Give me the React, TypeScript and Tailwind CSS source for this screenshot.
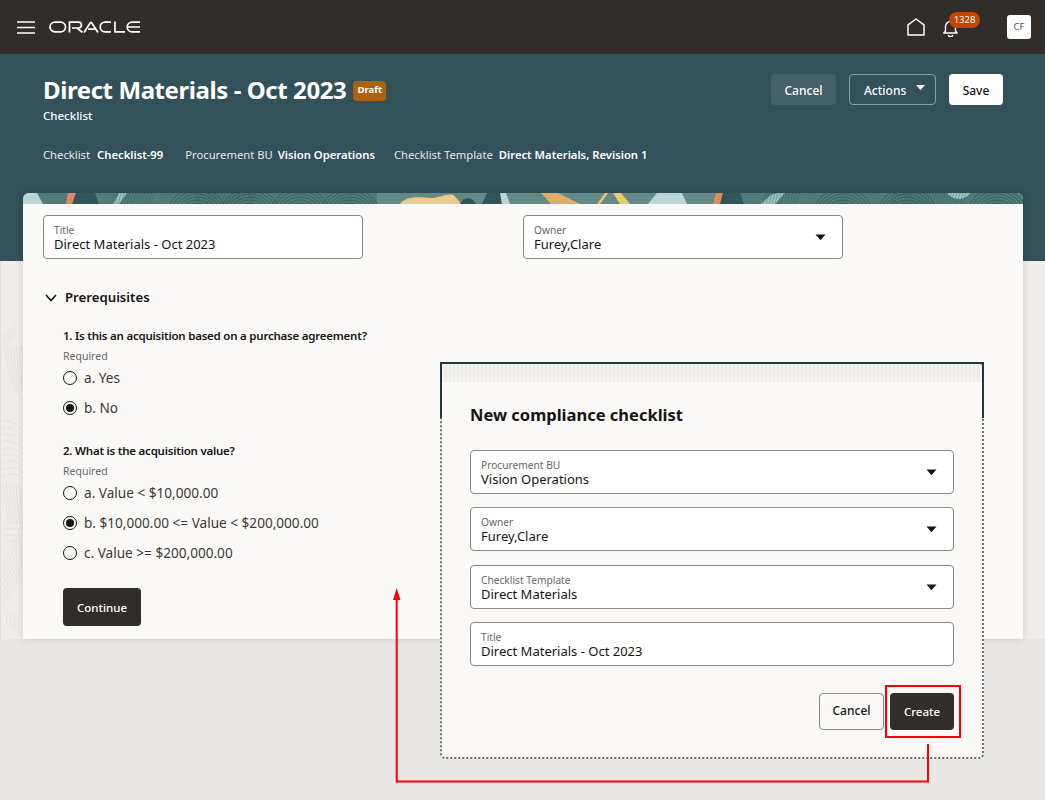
import React from "react";

function Field({ label, value, select, w }: { label: string; value: string; select?: boolean; w: string }) {
  return (
    <div className={`${w} h-[44px] shrink-0 relative bg-white border border-[#8c8985] rounded-[4px] pl-[10px] pt-[8px]`}>
      <div className="text-[10.2px] leading-[12px] text-[#6b6865]">{label}</div>
      <div className="text-[13px] leading-[16px] text-[#161513]">{value}</div>
      {select && (
        <svg className="absolute right-[16px] top-[18px]" width="11" height="7" viewBox="0 0 11 7">
          <path d="M0.5 0.5 H10.5 L5.5 6.2 Z" fill="#161513" />
        </svg>
      )}
    </div>
  );
}

function Radio({ label, on }: { label: string; on?: boolean }) {
  return (
    <div className="flex items-center h-[30px] gap-[7px]">
      <span className="w-[14px] h-[14px] rounded-full border-[1.5px] border-[#161513] flex items-center justify-center shrink-0">
        {on && <span className="w-[8px] h-[8px] rounded-full bg-[#161513]" />}
      </span>
      <span className="text-[13.6px] text-[#3b3936]">{label}</span>
    </div>
  );
}

function Question({ title, options }: { title: string; options: { l: string; on?: boolean }[] }) {
  return (
    <div>
      <div className="text-[11.5px] leading-[18px] font-semibold tracking-[-0.23px] text-[#161513]">{title}</div>
      <div className="text-[10.5px] leading-[14px] text-[#6b6865] mt-[4px]">Required</div>
      <div>
        {options.map((o) => (
          <Radio key={o.l} label={o.l} on={o.on} />
        ))}
      </div>
    </div>
  );
}

function Strip() {
  const rings = [174, 227, 277, 327, 820, 884, 974];
  const hatch = [
    [92, 132],
    [172, 232],
    [740, 777],
    [868, 945],
  ];
  return (
    <svg className="block w-full h-[11px]" viewBox="0 0 1000 11" preserveAspectRatio="none">
      <rect width="1000" height="11" fill="#517b78" />
      <rect x="354" width="350" height="11" fill="#648a87" />
      <path d="M0 0 H14 L20 11 H0 Z" fill="#b9d6d5" />
      <path d="M45 0 H53 L49 11 H43 Z" fill="#e48a5a" />
      <path d="M53 0 H72 L76 11 H49 Z" fill="#33555a" />
      <path d="M96 0 H104 L96 11 H90 Z" fill="#9cc4c1" />
      <path d="M377 11 C383 3 396 4 408 5 C418 5 424 0 430 2 C433 4 436 8 438 11 Z" fill="#ecc98f" />
      <path d="M437 11 C441 3 449 3 453 11 Z" fill="#33555a" />
      <path d="M464 0 H477 L479 11 H459 Z" fill="#33555a" />
      <path d="M477 0 H483 L487 11 H479 Z" fill="#b9d6d5" />
      <path d="M518 0 H535 L557 11 H528 Z" fill="#e0ae62" />
      <path d="M574 11 L582 0 H585 L577 11 Z" fill="#ecc96a" />
      <path d="M590 0 H598 L607 11 H597 Z" fill="#ecc96a" />
      <path d="M625 11 L634 0 H659 L664 11 Z" fill="#b9d6d5" />
      <path d="M693 0 H700 L697 11 H690 Z" fill="#e48a5a" />
      <path d="M700 0 H717 L721 11 H697 Z" fill="#33555a" />
      <path d="M738 11 L748 2 L755 0 H762 L752 11 Z" fill="#9cc4c1" />
      <path d="M924 0 H947 C942 8 930 8 924 0 Z" fill="#9cc4c1" />
      {hatch.map(([a, b]) => (
        <g key={a} stroke="#2c4a4b" strokeWidth="0.5" opacity="0.65">
          {Array.from({ length: Math.floor((b - a) / 3) }, (_, i) => (
            <path key={i} d={`M${a + i * 3 + 3} 0 L${a + i * 3} 11`} />
          ))}
        </g>
      ))}
      {rings.map((x) => (
        <g key={x} fill="none" stroke="#24403f" strokeWidth="0.6" opacity="0.8">
          {[10, 13, 16, 19, 22, 25, 28, 31].map((r) => (
            <circle key={r} cx={x} cy="26" r={r} />
          ))}
        </g>
      ))}
    </svg>
  );
}

function SidePattern() {
  const s = "#e3e2df";
  return (
    <svg className="w-full h-full block" viewBox="0 0 23 378" preserveAspectRatio="none">
      <g fill="none" stroke={s} strokeWidth="1">
        {[0, 1, 2, 3].map((i) => (
          <path key={`a${i}`} d={`M1 ${76 + i * 3} L18 ${62 + i * 3}`} />
        ))}
        {[0, 1, 2, 3, 4, 5, 6].map((i) => (
          <path key={`b${i}`} d={`M${4 + i * 3} 85 C${6 + i * 3} 110 ${12 + i * 2} 130 23 ${140 - i * 5}`} />
        ))}
        {[0, 1, 2, 3, 4, 5, 6, 7, 8].map((i) => (
          <path key={`c${i}`} d={`M1 ${160 + i * 7} C8 ${158 + i * 7} 16 ${162 + i * 6} 23 ${170 + i * 6}`} />
        ))}
        {[0, 1, 2, 3, 4, 5].map((i) => (
          <path key={`d${i}`} d={`M${2 + i * 3.5} 222 C${4 + i * 3} 240 ${6 + i * 3} 250 ${8 + i * 3} 262`} />
        ))}
        {[0, 1, 2, 3].map((i) => (
          <path key={`e${i}`} d={`M3 ${262 + i * 6} H23`} />
        ))}
        {[0, 1, 2, 3, 4, 5, 6].map((i) => (
          <path key={`f${i}`} d={`M1 ${345 - i * 7} C8 ${336 - i * 7} 16 ${325 - i * 8} 23 ${300 - i * 6}`} />
        ))}
        {[0, 1, 2, 3].map((i) => (
          <path key={`g${i}`} d={`M${6 + i * 4} 353 V${364 + i * 2}`} />
        ))}
      </g>
    </svg>
  );
}

export default function App() {
  return (
    <div
      className="relative w-[1045px] h-[800px] overflow-hidden bg-[#e8e7e5] text-[#161513]"
      style={{ fontFamily: '"Noto Sans", sans-serif' }}
    >
      {/* top bar */}
      <header className="h-[54px] bg-[#312d2a] flex items-center pl-[17px] pr-[14px]">
        <svg width="18" height="13" viewBox="0 0 18 13" className="shrink-0">
          <path d="M0 1 H18 M0 6.5 H18 M0 12 H18" stroke="#fff" strokeWidth="1.7" />
        </svg>
        <svg width="92" height="12" viewBox="0 0 92 12" className="ml-[14px] shrink-0">
          <g fill="none" stroke="#fff" strokeWidth="1.7">
            <rect x="1" y="1.2" width="15.5" height="9.6" rx="4.8" />
            <path d="M20.5 11.5 V1.2 H29.5 a2.8 2.8 0 0 1 0 5.8 H23 M28 7 L33.5 11.5" />
            <path d="M35 11.5 L41.5 1.5 H42.5 L49 11.5 M39 8.2 H46" />
            <path d="M62 1.2 H56 a4.8 4.8 0 0 0 0 9.6 H62" />
            <path d="M66 0.5 V10.8 H76" />
            <path d="M91 1.2 H83 a4.8 4.8 0 0 0 0 9.6 H91 M79 6 H91" />
          </g>
        </svg>
        <div className="flex-1" />
        <svg width="18" height="18" viewBox="0 0 18 18" className="shrink-0 mr-[18px]">
          <path d="M1 17 V6.8 L9 1 L17 6.8 V17 Z" fill="none" stroke="#fff" strokeWidth="1.5" strokeLinejoin="round" />
        </svg>
        <div className="relative w-[15px] h-[17px] mr-[49px] mt-[2px] shrink-0">
          <svg width="15" height="17" viewBox="0 0 15 17" className="block">
            <path d="M2.5 11 V6.5 a5 5 0 0 1 10 0 V11 L14.2 13 H0.8 Z" fill="none" stroke="#fff" strokeWidth="1.4" strokeLinejoin="round" />
            <path d="M5.5 15 a2 1.8 0 0 0 4 0" fill="none" stroke="#fff" strokeWidth="1.4" />
          </svg>
          <span className="absolute left-[6px] top-[-8px] h-[16px] w-[31px] rounded-full bg-[#c74300] text-white text-[9.5px] leading-[16px] text-center">
            1328
          </span>
        </div>
        <div className="w-[24px] h-[24px] bg-white rounded-[3px] text-[9.5px] text-[#57534f] flex items-center justify-center shrink-0">CF</div>
      </header>

      {/* teal band */}
      <section className="h-[207px] bg-[#325158] pl-[43px] pr-[42px] pt-[20px] text-white">
        <div className="flex items-start justify-between">
          <div>
            <div className="flex items-center gap-[7px] h-[33px]">
              <h1 className="text-[24px] leading-[32px] font-bold tracking-[-0.42px] whitespace-nowrap mt-[-2px]">Direct Materials - Oct 2023</h1>
              <span className="h-[20px] w-[33px] rounded-[4px] bg-[#ac630c] text-[9.5px] font-bold flex items-center justify-center">Draft</span>
            </div>
            <div className="text-[11.5px] leading-[16px] font-medium mt-[1px]">Checklist</div>
          </div>
          <div className="flex gap-[13px]">
            <button className="w-[65px] h-[31px] rounded-[4px] bg-[#426066] text-[12px] font-medium text-white pt-[2px]">Cancel</button>
            <button className="w-[87px] h-[31px] rounded-[4px] border border-[#8a9fa2] text-[12px] font-medium text-white flex items-center pl-[14px] pt-[2px]">
              Actions
              <svg width="9" height="5" viewBox="0 0 9 5" className="ml-[10px] mb-[6px]"><path d="M0 0 H9 L4.5 5 Z" fill="#fff" /></svg>
            </button>
            <button className="w-[54px] h-[31px] rounded-[4px] bg-white text-[12px] font-medium text-[#161513] pt-[2px]">Save</button>
          </div>
        </div>
        <div className="flex mt-[23px] text-[11.25px] leading-[16px] text-[#e4e9ea] whitespace-nowrap">
          <span className="mr-[7px]">Checklist</span>
          <span className="font-semibold text-white mr-[22px]">Checklist-99</span>
          <span className="mr-[5px]">Procurement BU</span>
          <span className="font-semibold text-white mr-[19px]">Vision Operations</span>
          <span className="mr-[6px]">Checklist Template</span>
          <span className="font-semibold text-white">Direct Materials, Revision 1</span>
        </div>
      </section>

      {/* side decoration */}
      <div className="absolute left-0 right-0 top-[261px] h-[378px] bg-[#eeedeb] flex justify-between">
        <div className="w-[23px] h-full border-l border-[#e0dfe0]"><SidePattern /></div>
      </div>

      {/* card */}
      <div className="absolute left-[23px] top-[193px] w-[1000px] h-[446px] rounded-t-[6px] overflow-hidden bg-[#faf9f7] shadow-[0_0_8px_rgba(0,0,0,0.13)]">
        <Strip />
        <div className="pl-[20px] pt-[11px]">
          <div className="flex">
            <Field w="w-[320px]" label="Title" value="Direct Materials - Oct 2023" />
            <div className="w-[160px] shrink-0" />
            <Field w="w-[320px]" label="Owner" value="Furey,Clare" select />
          </div>
          <div className="flex items-center mt-[28px] h-[22px]">
            <svg width="12" height="8" viewBox="0 0 12 8" className="ml-[2px]">
              <path d="M1 1 L6 6.5 L11 1" fill="none" stroke="#161513" strokeWidth="1.6" />
            </svg>
            <span className="ml-[8px] text-[13.2px] font-semibold text-[#161513]">Prerequisites</span>
          </div>
          <div className="pl-[20px] pt-[18px]">
            <Question title="1. Is this an acquisition based on a purchase agreement?" options={[{ l: "a. Yes" }, { l: "b. No", on: true }]} />
            <div className="h-[19px]" />
            <Question
              title="2. What is the acquisition value?"
              options={[
                { l: "a. Value < $10,000.00" },
                { l: "b. $10,000.00 <= Value < $200,000.00", on: true },
                { l: "c. Value >= $200,000.00" },
              ]}
            />
            <button className="mt-[20px] w-[78px] h-[38px] rounded-[4px] bg-[#312d2a] text-white text-[11.5px] font-medium pt-[1px]">Continue</button>
          </div>
        </div>
      </div>

      {/* dialog */}
      <div className="absolute left-[440px] top-[362px] w-[544px] h-[397px] bg-[#faf9f7] rounded-[5px] border-2 border-dotted border-[#6f6c69] pl-[28px] pr-[28px]">
        <div className="absolute left-0 right-0 top-0 h-[18px] rounded-t-[4px] bg-[repeating-linear-gradient(90deg,#eceae7_0px,#f7f6f3_2px,#e9e8e5_4px)]" />
        <div className="absolute left-[-2px] right-[-2px] top-[-2px] h-[2px] bg-[#1e3a3d]" />
        <div className="absolute left-[-2px] top-[-2px] w-[2px] h-[56px] bg-[#1e3a3d]" />
        <div className="absolute right-[-2px] top-[-2px] w-[2px] h-[56px] bg-[#1e3a3d]" />
        <h2 className="relative text-[16.5px] leading-[22px] font-bold mt-[40px] mb-[24px] text-[#161513]">New compliance checklist</h2>
        <div className="flex flex-col gap-[13.33px]">
          <Field w="w-[484px]" label="Procurement BU" value="Vision Operations" select />
          <Field w="w-[484px]" label="Owner" value="Furey,Clare" select />
          <Field w="w-[484px]" label="Checklist Template" value="Direct Materials" select />
          <Field w="w-[484px]" label="Title" value="Direct Materials - Oct 2023" />
        </div>
        <div className="flex justify-end gap-[6px] mt-[27px] w-[484px]">
          <button className="w-[65px] h-[37px] rounded-[4px] border border-[#8c8985] text-[12px] font-medium text-[#161513]">Cancel</button>
          <button className="w-[64px] h-[37px] rounded-[4px] bg-[#312d2a] text-[11.5px] font-medium text-white">Create</button>
        </div>
      </div>

      {/* red highlight box + arrow */}
      <div className="absolute left-[885px] top-[685px] w-[76px] h-[53px] border-[2px] border-[#f00]" />
      <svg className="absolute left-[390px] top-[585px]" width="545" height="200" viewBox="0 0 545 200">
        <path d="M538 159 V196.5 H6.7 V14" fill="none" stroke="#f00" strokeWidth="2" />
        <path d="M6.7 3 L10.5 15 H3 Z" fill="#f00" />
      </svg>
    </div>
  );
}
